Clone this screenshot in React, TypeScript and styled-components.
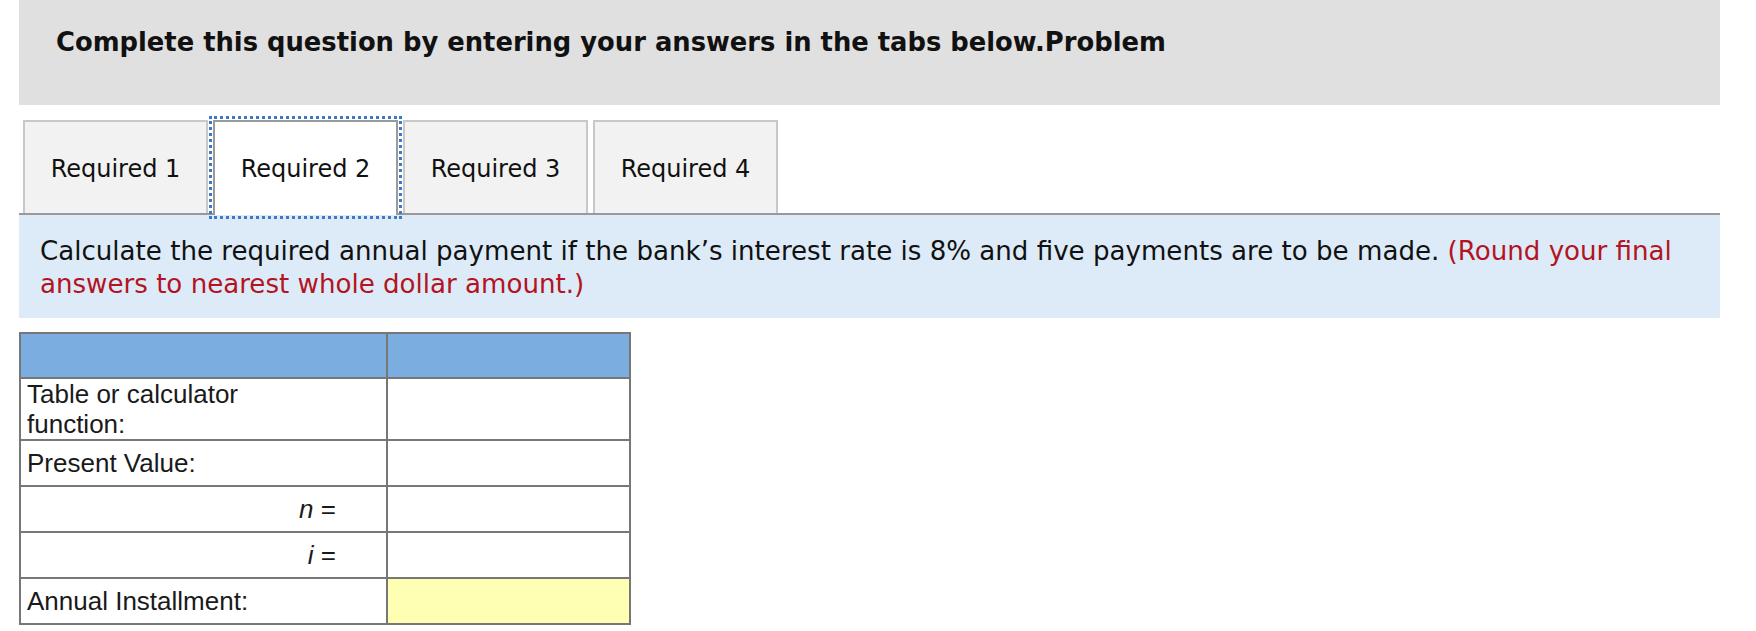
import React from "react";
import styled, { createGlobalStyle } from "styled-components";

const GlobalStyle = createGlobalStyle`
  html, body {
    margin: 0;
    padding: 0;
    background: #ffffff;
  }
  body {
    font-family: "DejaVu Sans", Verdana, sans-serif;
    color: #111;
  }
`;

const Page = styled.div`
  width: 1701px;
  padding-left: 19px;
  display: flex;
  flex-direction: column;
`;

const Header = styled.div`
  height: 105px;
  background: #e0e0e0;
  display: flex;
  align-items: center;
  padding-left: 37px;
  padding-bottom: 22px;
  box-sizing: border-box;
`;

const Title = styled.h1`
  margin: 0;
  font-family: "DejaVu Sans", Verdana, sans-serif;
  font-weight: bold;
  font-size: 25.8px;
  color: #111;
`;

const TabList = styled.div`
  margin-top: 15px;
  display: flex;
  gap: 5px;
  padding-left: 4px;
  border-bottom: 2px solid #999999;
  height: 93px;
  box-sizing: content-box;
`;

const Tab = styled.button<{ $active?: boolean }>`
  width: 185px;
  height: ${(p) => (p.$active ? "95px" : "93px")};
  margin-bottom: ${(p) => (p.$active ? "-2px" : "0")};
  padding: 2px 0 ${(p) => (p.$active ? "2px" : "0")} 0;
  box-sizing: border-box;
  background: ${(p) => (p.$active ? "#ffffff" : "#f2f2f2")};
  border: 2px solid ${(p) => (p.$active ? "#9a9a9a" : "#c8c8c8")};
  border-bottom: none;
  font-family: "DejaVu Sans", Verdana, sans-serif;
  font-size: 24px;
  color: #111;
  outline: ${(p) => (p.$active ? "3px dotted #3d7ac6" : "none")};
  outline-offset: 1px;
  position: relative;
  z-index: ${(p) => (p.$active ? 1 : 0)};
`;

const Panel = styled.div`
  background: #dcebf7;
  padding: 20px 21px 17px 21px;
  font-size: 26.1px;
  line-height: 33px;
  color: #111;
`;

const Hint = styled.span`
  color: #b3141f;
`;

const Table = styled.table`
  margin-top: 14px;
  border-collapse: collapse;
  width: 610px;
  font-family: "Liberation Sans", Arial, sans-serif;
  font-size: 26px;
  line-height: 30px;
  color: #1a1a1a;
  table-layout: fixed;
`;

const Row = styled.tr<{ $h: number }>`
  height: ${(p) => p.$h}px;
`;

const HeadCell = styled.th`
  background: #7badE1;
  border: 2px solid #777777;
  padding: 0;
`;

const LabelCell = styled.td<{ $right?: boolean }>`
  border: 2px solid #777777;
  padding: ${(p) => (p.$right ? "0 50px 0 6px" : "0 6px")};
  text-align: ${(p) => (p.$right ? "right" : "left")};
  vertical-align: middle;
`;

const InputCell = styled.td<{ $highlight?: boolean }>`
  border: 2px solid #777777;
  background: ${(p) => (p.$highlight ? "#ffffb3" : "#ffffff")};
  padding: 0;
`;

const Var = styled.i`
  font-style: italic;
`;

export default function App() {
  return (
    <>
      <GlobalStyle />
      <Page>
        <Header>
          <Title>Complete this question by entering your answers in the tabs below.Problem</Title>
        </Header>
        <TabList>
          <Tab>Required 1</Tab>
          <Tab $active>Required 2</Tab>
          <Tab>Required 3</Tab>
          <Tab>Required 4</Tab>
        </TabList>
        <Panel>
          Calculate the required annual payment if the bank’s interest rate is 8% and five payments are to be made.{" "}
          <Hint>(Round your final answers to nearest whole dollar amount.)</Hint>
        </Panel>
        <Table>
          <colgroup>
            <col style={{ width: 367 }} />
            <col style={{ width: 243 }} />
          </colgroup>
          <tbody>
            <Row $h={45}>
              <HeadCell />
              <HeadCell />
            </Row>
            <Row $h={62}>
              <LabelCell>Table or calculator<br />function:</LabelCell>
              <InputCell />
            </Row>
            <Row $h={46}>
              <LabelCell>Present Value:</LabelCell>
              <InputCell />
            </Row>
            <Row $h={46}>
              <LabelCell $right><Var>n</Var> =</LabelCell>
              <InputCell />
            </Row>
            <Row $h={46}>
              <LabelCell $right><Var>i</Var> =</LabelCell>
              <InputCell />
            </Row>
            <Row $h={46}>
              <LabelCell>Annual Installment:</LabelCell>
              <InputCell $highlight />
            </Row>
          </tbody>
        </Table>
      </Page>
    </>
  );
}
